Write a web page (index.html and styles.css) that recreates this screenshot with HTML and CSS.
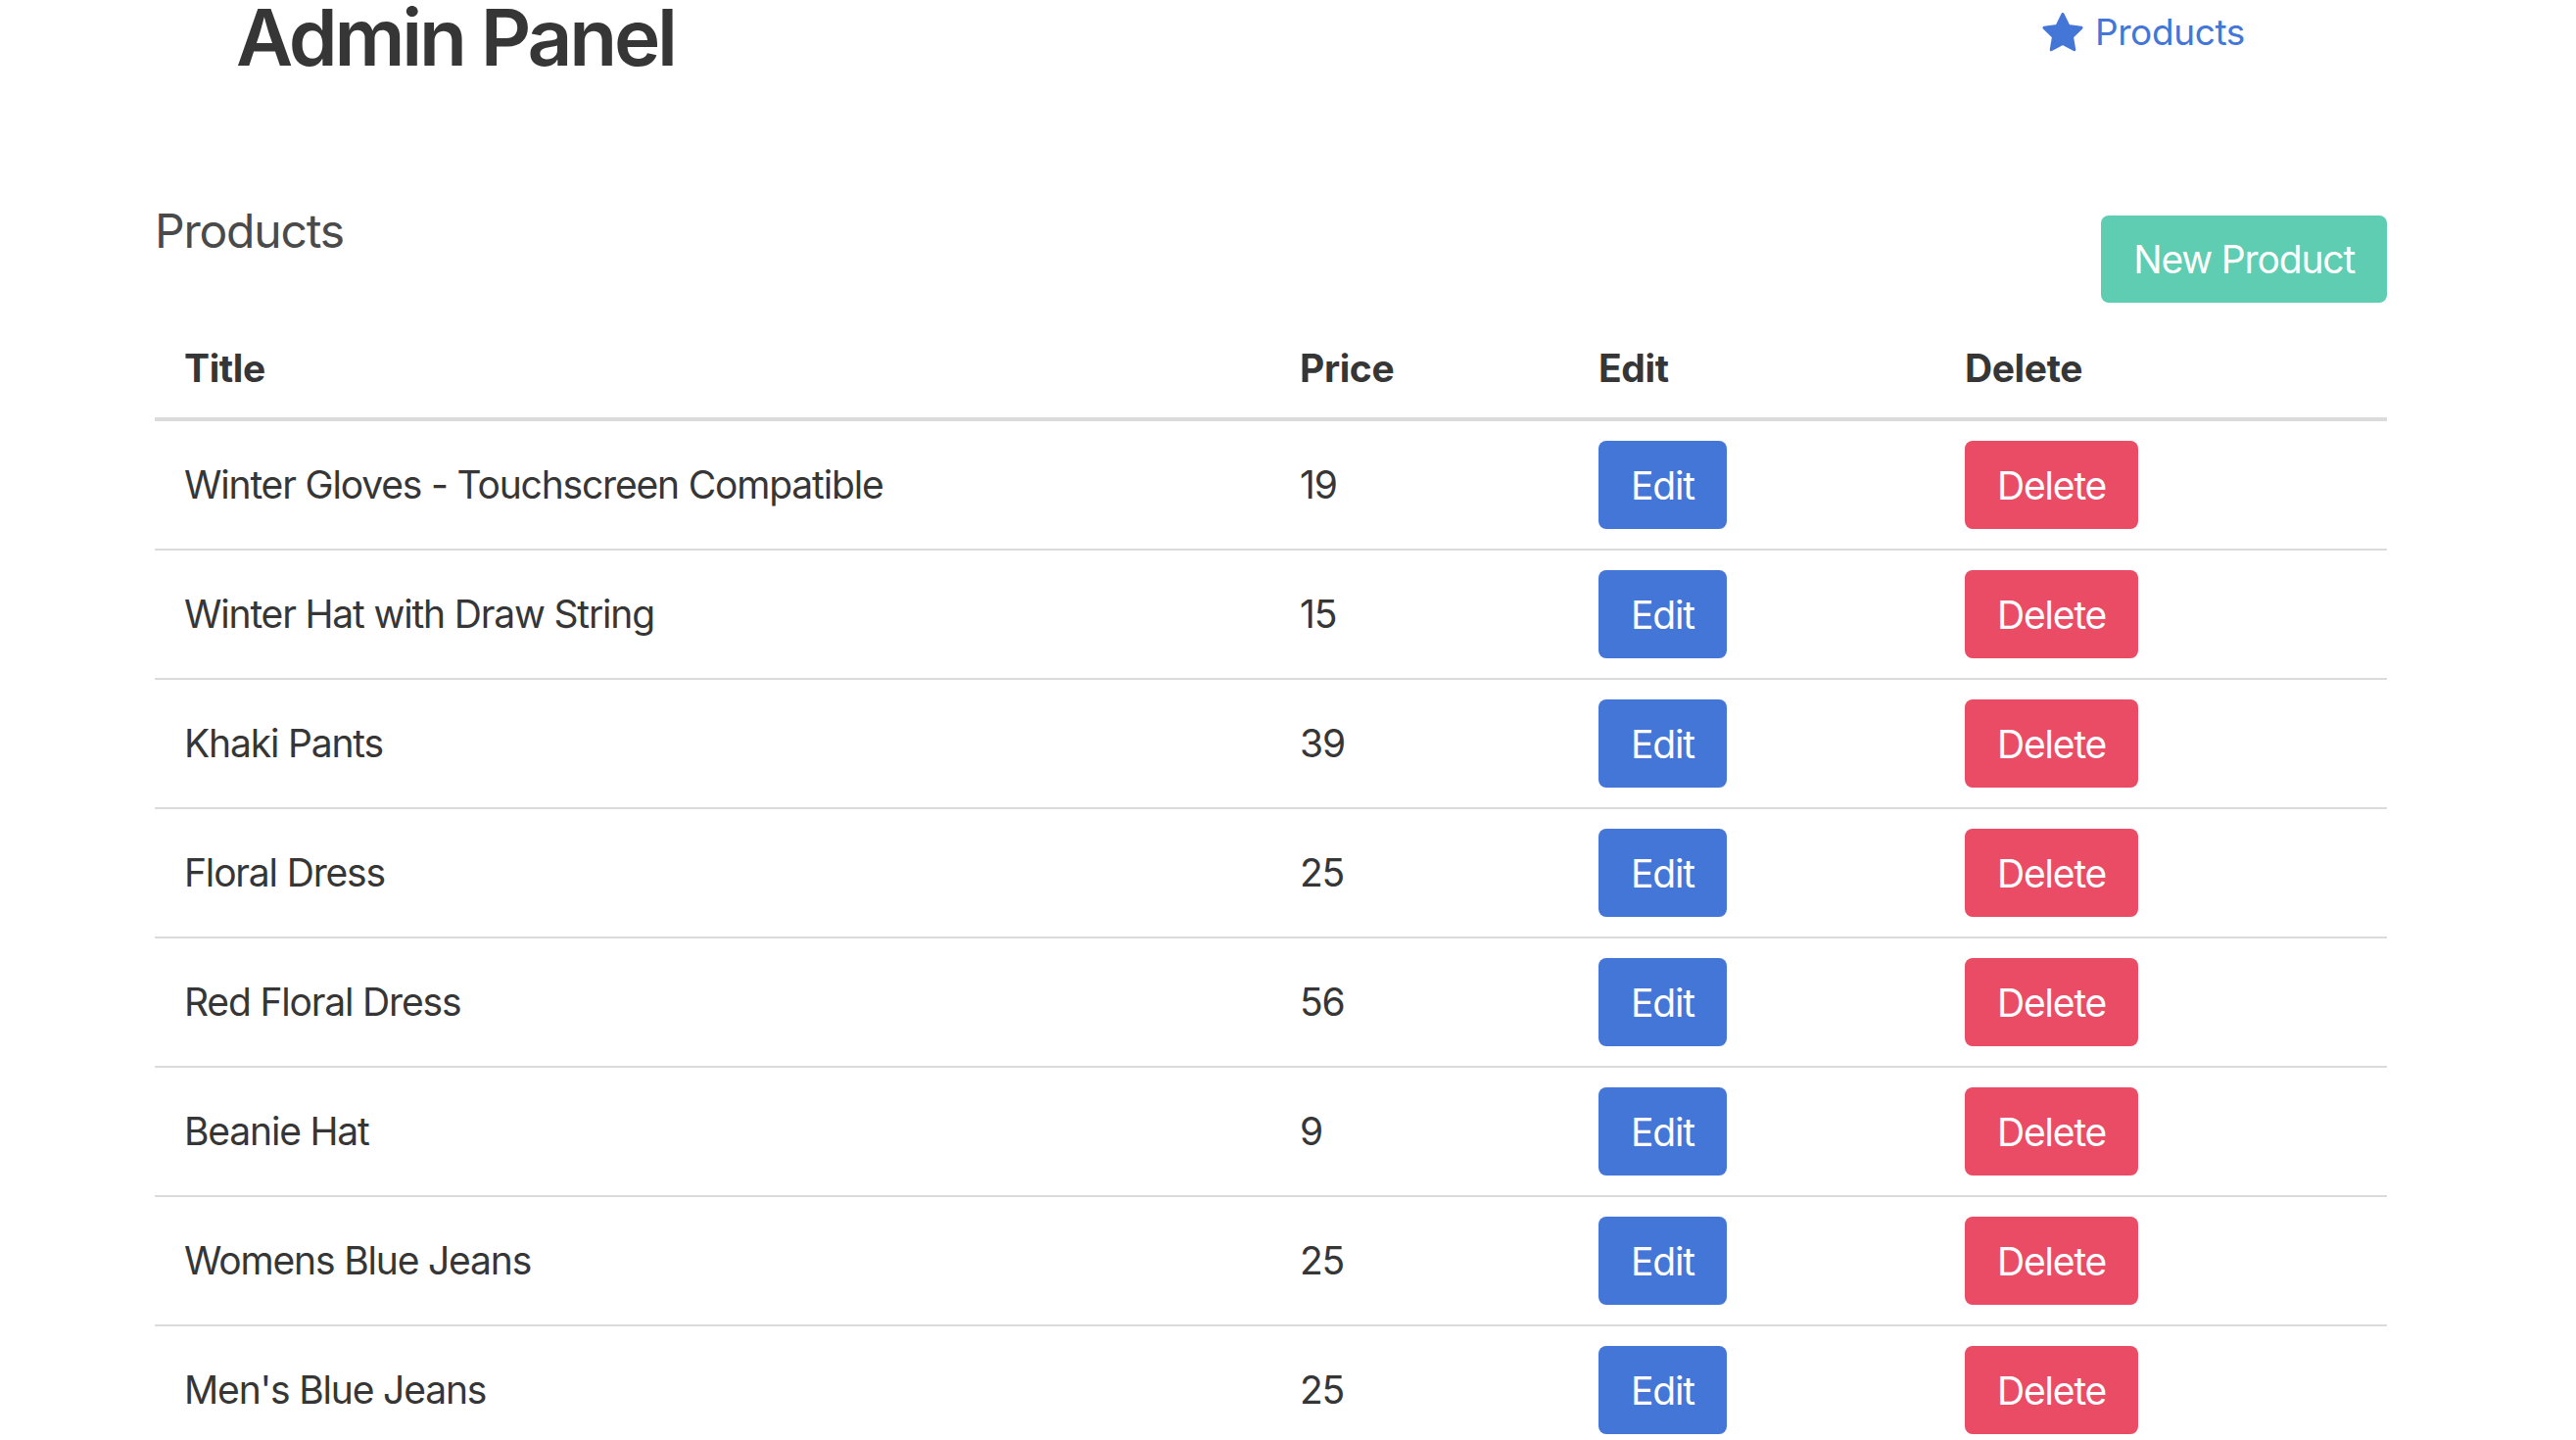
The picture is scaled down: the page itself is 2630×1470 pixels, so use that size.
FILE: index.html
```html
<!DOCTYPE html>
<html lang="en">
<head>
<meta charset="utf-8">
<title>Admin Panel</title>
<link rel="stylesheet" href="styles.css">
</head>
<body>
<header class="topbar">
  <h1 class="brand">Admin Panel</h1>
  <a class="nav-link" href="#">
    <svg class="star" viewBox="0 0 42 40" width="42" height="40" aria-hidden="true">
      <polygon points="21,1.5 26.88,13.41 40.02,15.32 30.51,24.59 32.76,37.68 21,31.5 9.24,37.68 11.49,24.59 1.98,15.32 15.12,13.41" fill="#4376d6" stroke="#4376d6" stroke-width="3" stroke-linejoin="round"/>
    </svg>
    <span>Products</span>
  </a>
</header>
<main class="content">
  <div class="section-head">
    <h2 class="subtitle">Products</h2>
    <a class="btn btn-primary" href="#">New Product</a>
  </div>
  <table class="table">
    <colgroup>
      <col class="col-title">
      <col class="col-price">
      <col class="col-edit">
      <col class="col-delete">
    </colgroup>
    <thead>
      <tr><th>Title</th><th>Price</th><th>Edit</th><th>Delete</th></tr>
    </thead>
    <tbody>
      <tr><td>Winter Gloves - Touchscreen Compatible</td><td>19</td><td><a class="btn btn-link" href="#">Edit</a></td><td><a class="btn btn-danger" href="#">Delete</a></td></tr>
      <tr><td>Winter Hat with Draw String</td><td>15</td><td><a class="btn btn-link" href="#">Edit</a></td><td><a class="btn btn-danger" href="#">Delete</a></td></tr>
      <tr><td>Khaki Pants</td><td>39</td><td><a class="btn btn-link" href="#">Edit</a></td><td><a class="btn btn-danger" href="#">Delete</a></td></tr>
      <tr><td>Floral Dress</td><td>25</td><td><a class="btn btn-link" href="#">Edit</a></td><td><a class="btn btn-danger" href="#">Delete</a></td></tr>
      <tr><td>Red Floral Dress</td><td>56</td><td><a class="btn btn-link" href="#">Edit</a></td><td><a class="btn btn-danger" href="#">Delete</a></td></tr>
      <tr><td>Beanie Hat</td><td>9</td><td><a class="btn btn-link" href="#">Edit</a></td><td><a class="btn btn-danger" href="#">Delete</a></td></tr>
      <tr><td>Womens Blue Jeans</td><td>25</td><td><a class="btn btn-link" href="#">Edit</a></td><td><a class="btn btn-danger" href="#">Delete</a></td></tr>
      <tr><td>Men's Blue Jeans</td><td>25</td><td><a class="btn btn-link" href="#">Edit</a></td><td><a class="btn btn-danger" href="#">Delete</a></td></tr>
    </tbody>
  </table>
</main>
</body>
</html>
```

FILE: styles.css
```css
html, body {
  margin: 0;
  padding: 0;
  overflow: hidden;
  background: #ffffff;
}

body {
  font-family: Inter, "Noto Sans", "Liberation Sans", sans-serif;
  color: #363636;
}

.topbar {
  display: flex;
  justify-content: space-between;
  align-items: flex-start;
  padding: 0 338px 0 241px;
}

.brand {
  margin: 0;
  font-size: 80px;
  font-weight: 600;
  line-height: 76px;
  letter-spacing: -0.04em;
  color: #363636;
}

.nav-link {
  display: flex;
  align-items: center;
  gap: 12px;
  margin-top: 13px;
  color: #4376d6;
  text-decoration: none;
  font-size: 37px;
  line-height: 40px;
  letter-spacing: -0.01em;
}

.star {
  display: block;
  flex: none;
}

.content {
  width: 2279px;
  margin-left: 158px;
}

.section-head {
  display: flex;
  justify-content: space-between;
  align-items: flex-start;
  margin-top: 130px;
}

.subtitle {
  margin: 0;
  font-size: 48px;
  font-weight: 400;
  line-height: 60px;
  letter-spacing: -0.025em;
  color: #4a4a4a;
}

.btn {
  display: inline-flex;
  align-items: center;
  justify-content: center;
  height: 90px;
  box-sizing: border-box;
  padding: 0 33px;
  border-radius: 8px;
  color: #ffffff;
  text-decoration: none;
  font-size: 39px;
  line-height: 1;
  letter-spacing: -0.03em;
}

.section-head .btn {
  margin-top: 14px;
  height: 89px;
}

.btn-primary { background: #5ecdb1; }
.btn-link { background: #4376d6; }
.btn-danger { background: #ea4c66; }

.table {
  width: 2279px;
  margin-top: 17px;
  border-collapse: collapse;
  table-layout: fixed;
}

.col-title { width: 1139px; }
.col-price { width: 305px; }
.col-edit { width: 374px; }
.col-delete { width: 461px; }

.table th,
.table td {
  padding: 20px 30px;
  text-align: left;
  font-size: 39px;
  line-height: 60px;
  color: #363636;
}

.table th {
  font-weight: 700;
  letter-spacing: -0.01em;
  border-bottom: 4px solid #dbdbdb;
  vertical-align: top;
}

.table td {
  font-weight: 400;
  letter-spacing: -0.03em;
  border-bottom: 2px solid #dbdbdb;
  vertical-align: middle;
}

.table td .btn {
  vertical-align: middle;
}
```
